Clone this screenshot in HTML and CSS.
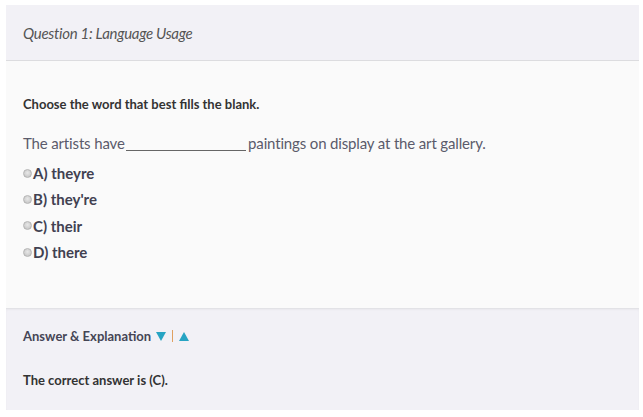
FILE: index.html
```html
<!DOCTYPE html>
<html>
<head>
<meta charset="utf-8">
<link rel="stylesheet" href="styles.css">
</head>
<body>
<div class="card">
  <div class="card-header">
    <span class="title">Question 1: Language Usage</span>
  </div>
  <div class="card-body">
    <p class="prompt">Choose the word that best fills the blank.</p>
    <p class="sentence">The artists have <span class="blank"></span> paintings on display at the art gallery.</p>
    <ul class="options">
      <li><span class="radio"></span>A) theyre</li>
      <li><span class="radio"></span>B) they're</li>
      <li><span class="radio"></span>C) their</li>
      <li><span class="radio"></span>D) there</li>
    </ul>
  </div>
  <div class="card-footer">
    <div class="answer-toggle">Answer &amp; Explanation <span class="tri down"></span><span class="sep"></span><span class="tri up"></span></div>
    <p class="answer">The correct answer is (C).</p>
  </div>
</div>
</body>
</html>
```
FILE: styles.css
```css
html, body {
  margin: 0;
  padding: 0;
  background: #ffffff;
  font-family: Lato, "Open Sans", "Liberation Sans", sans-serif;
}
.card {
  margin: 5px 4px 0 6px;
  width: 633px;
}
.card-header {
  background: #f2f1f6;
  border-bottom: 1px solid #dcdcdf;
  display: flex;
  align-items: center;
  padding-left: 17px;
  box-sizing: border-box;
  height: 56px;
}
.title {
  font-style: italic;
  font-size: 15px;
  color: #555;
  letter-spacing: -0.3px;
  margin-top: 1px;
}
.card-body {
  background: #fafafa;
  height: 247px;
  padding: 35px 17px 0;
  box-sizing: border-box;
}
.prompt {
  margin: 0;
  font-size: 13px;
  font-weight: 700;
  color: #333;
  line-height: 16px;
}
.sentence {
  margin: 22px 0 0;
  font-size: 15px;
  color: #5b5b6b;
  line-height: 18px;
  letter-spacing: -0.15px;
}
.blank {
  display: inline-block;
  width: 120px;
  border-bottom: 1px solid #666;
  vertical-align: -2px;
  margin: 0 -2px;
}
.options {
  list-style: none;
  margin: 8px 0 0;
  padding: 0;
}
.options li {
  display: flex;
  align-items: center;
  height: 26.3px;
  font-size: 15px;
  font-weight: 700;
  color: #414151;
}
.radio {
  width: 9px;
  height: 9px;
  border-radius: 50%;
  background: radial-gradient(circle at 50% 40%, #e8e8e8 0, #cbcbcb 70%, #ababab 100%);
  border: 0.5px solid #b5b5b5;
  box-sizing: border-box;
  margin-right: 1px;
}
.card-footer {
  background: #f2f1f6;
  border-top: 1px solid #e2e2e6;
  box-shadow: inset 0 1px 2px rgba(0,0,0,0.04);
  height: 102px;
  padding: 19px 17px 0;
  box-sizing: border-box;
}
.answer-toggle {
  display: flex;
  align-items: center;
  font-size: 13px;
  font-weight: 700;
  color: #454555;
  line-height: 16px;
}
.tri {
  width: 0;
  height: 0;
  border-left: 5px solid transparent;
  border-right: 5px solid transparent;
}
.tri.down {
  border-top: 9px solid #27a4c3;
  margin-left: 5px;
}
.tri.up {
  border-bottom: 9px solid #27a4c3;
}
.sep {
  width: 1px;
  height: 12px;
  background: #e0a060;
  margin: 0 6px;
}
.answer {
  margin: 28px 0 0;
  font-size: 13px;
  font-weight: 700;
  color: #333;
  line-height: 16px;
}
```
